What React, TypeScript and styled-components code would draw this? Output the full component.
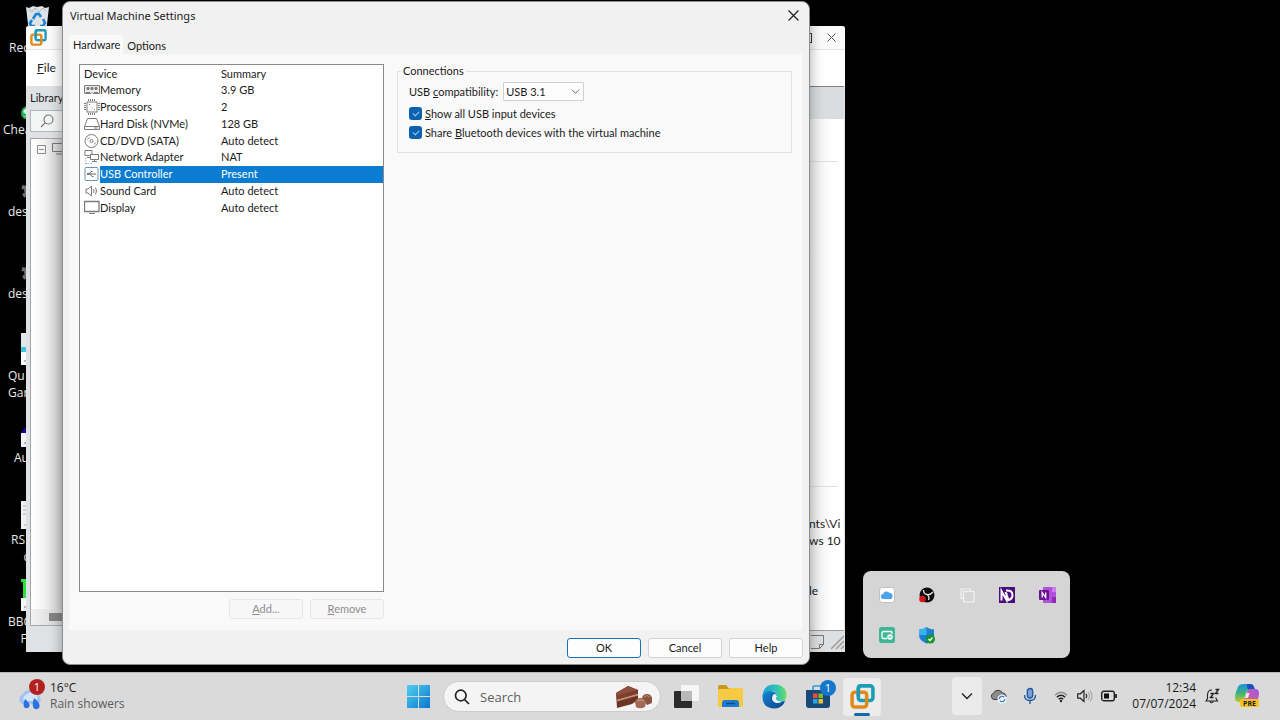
import React from 'react';
import styled, { createGlobalStyle, css } from 'styled-components';

const uiFont = `Lato, "Noto Sans", sans-serif`;
const shellFont = `"Open Sans", "Noto Sans", sans-serif`;

const GlobalStyle = createGlobalStyle`
  * { box-sizing: border-box; }
  body { margin: 0; background: #000; font-family: ${shellFont}; font-size: 12px; color: #1b1b1b; }
  button, select, input { font: inherit; color: inherit; }
  svg { display: block; flex: none; }
`;

const Screen = styled.div`
  display: grid;
  grid-template-rows: 1fr auto;
  min-height: 100vh;
  background: #000;
`;

const Desktop = styled.main`
  position: relative;
  overflow: hidden;
  min-height: 668px;
`;

/* ---------- desktop shortcuts ---------- */

const Shortcuts = styled.ul`
  list-style: none;
  margin: 0;
  padding: 0;
  width: 74px;
`;

const Shortcut = styled.li`
  display: flex;
  flex-direction: column;
  align-items: center;
  height: 82px;
  padding-top: 5px;
`;

const ShortcutLabel = styled.span<{ $indent: number }>`
  align-self: stretch;
  margin-top: 2px;
  padding-left: ${(p) => p.$indent}px;
  font-size: 12px;
  line-height: 17px;
  white-space: pre;
  color: #e8e8e8;
`;

/* ---------- windows ---------- */

const LibraryWindow = styled.section`
  position: absolute;
  left: 26px;
  top: 26px;
  width: 819px;
  height: 626px;
  display: flex;
  flex-direction: column;
  background: #dfe2e4;
  border-radius: 3px 3px 0 0;
  font-family: ${uiFont};
  overflow: hidden;
`;

const LibraryTitle = styled.header`
  display: flex;
  align-items: center;
  justify-content: space-between;
  height: 24px;
  padding: 0 9px 0 4px;
  background: #fbfbfb;
  border-bottom: 1px solid #e4e4e4;
`;

const WindowButtons = styled.div`
  display: flex;
  gap: 14px;
`;

const PlainButton = styled.button`
  display: grid;
  place-items: center;
  padding: 0;
  border: 0;
  background: none;
`;

const MenuBar = styled.nav`
  height: 36px;
  padding-left: 11px;
  background: #fff;
  line-height: 35px;
`;

const LibraryBody = styled.div`
  flex: 1;
  display: flex;
  min-height: 0;
`;

const Sidebar = styled.aside`
  width: 220px;
  display: flex;
  flex-direction: column;
  padding: 0 4px 26px;
`;

const SidebarTitle = styled.h2`
  margin: 0;
  font-size: 11px;
  font-weight: 400;
  line-height: 24px;
`;

const SidebarSearch = styled.div`
  display: flex;
  align-items: center;
  height: 22px;
  margin-bottom: 6px;
  padding-left: 9px;
  border: 1px solid #b4b6b8;
  background: #f4f5f5;
`;

const Tree = styled.div`
  flex: 1;
  display: flex;
  flex-direction: column;
  justify-content: space-between;
  border: 1px solid #a3a5a8;
  background: linear-gradient(90deg, #fff, #f4f4f4 12px, #c8c8c8 34px);
`;

const TreeRoot = styled.div`
  display: flex;
  align-items: center;
  gap: 6px;
  padding: 4px 6px;
`;

const ScrollTrack = styled.div`
  height: 16px;
  padding: 4px 0 4px 18px;
  background: linear-gradient(90deg, #f2f2f2, #d2d2d2 34px);
`;

const ScrollThumb = styled.div`
  height: 8px;
  background: #858585;
`;

const Details = styled.div`
  flex: 1;
  display: flex;
  flex-direction: column;
  margin-right: 1px;
  border-top: 1px solid #7f8183;
`;

const DetailsTabs = styled.div`
  height: 32px;
  background: #dadddf;
`;

const DetailsPage = styled.div`
  flex: 1;
  display: flex;
  flex-direction: column;
  padding: 0 6px;
  background: linear-gradient(270deg, #fff, #fff 12px, #ececec 34px);
`;

const DetailsBand = styled.div<{ $height: number }>`
  height: ${(p) => p.$height}px;
  border-bottom: 1px solid #dcdcdc;
`;

const DetailsText = styled.div`
  align-self: flex-end;
  width: 29px;
  margin-top: 28px;
`;

const DetailsLine = styled.p<{ $gap?: number }>`
  margin: ${(p) => p.$gap ?? 0}px 0 0;
  line-height: 17px;
  white-space: pre;
`;

const StatusBar = styled.footer`
  display: flex;
  align-items: center;
  justify-content: flex-end;
  gap: 6px;
  height: 22px;
  border-top: 1px solid #98999b;
  background: #dddfe1;
`;

const Dialog = styled.section`
  position: absolute;
  left: 62px;
  top: 1px;
  width: 748px;
  height: 664px;
  display: flex;
  flex-direction: column;
  border: 1px solid #8d8d8d;
  border-radius: 8px;
  background: #f1f1f1;
  box-shadow: 0 0 14px rgba(0, 0, 0, 0.35);
  font-family: ${uiFont};
  font-size: 11px;
  overflow: hidden;
`;

const DialogTitle = styled.header`
  display: flex;
  align-items: center;
  justify-content: space-between;
  height: 28px;
  padding: 0 10px 2px 7px;
  font-family: "Noto Sans", sans-serif;
`;

const DialogHeading = styled.h1`
  margin: 0;
  font-size: 11px;
  font-weight: 400;
`;

const TabStrip = styled.div`
  display: flex;
  align-items: flex-end;
  height: 24px;
  padding: 0 6px;
`;

const Tab = styled.button<{ $active?: boolean }>`
  height: 17px;
  padding: 0 4px;
  border: 0;
  background: none;
  line-height: 17px;
  ${(p) =>
    p.$active &&
    css`
      height: 19px;
      padding-right: 3px;
      background: #f9f9f9;
    `}
`;

const TabPage = styled.div`
  flex: 1;
  display: flex;
  gap: 13px;
  margin: 0 7px 0 6px;
  padding: 10px 10px 11px;
  background: #f9f9f9;
`;

const DeviceColumn = styled.div`
  flex: 0 0 305px;
  display: flex;
  flex-direction: column;
  gap: 7px;
`;

const DeviceList = styled.div`
  flex: 1;
  padding-top: 1px;
  border: 1px solid #8a8a8a;
  background: #fff;
`;

const DeviceTable = styled.table`
  width: 100%;
  height: 150px;
  border-collapse: collapse;
  table-layout: fixed;
  text-align: left;

  th, td { padding: 0; font-weight: 400; line-height: 16px; white-space: nowrap; }
`;

const IconCol = styled.col`
  width: 20px;
`;

const NameCol = styled.col`
  width: 121px;
`;

const DeviceHead = styled.th`
  &:first-child { text-indent: 4px; }
`;

const IconCell = styled.td`
  svg { margin: 0 0 0 4px; }
`;

const DeviceRow = styled.tr<{ $selected: boolean }>`
  ${(p) =>
    p.$selected &&
    css`
      color: #fff;
      td + td { background: #0b7cd0; }
    `}
`;

const ButtonRow = styled.div`
  display: flex;
  justify-content: flex-end;
  gap: 7px;
`;

const PushButton = styled.button<{ $primary?: boolean }>`
  width: 74px;
  height: 20px;
  padding: 0;
  border: 1px solid ${(p) => (p.$primary ? '#1a72b8' : '#d2d2d2')};
  border-radius: 3px;
  background: #fdfdfd;
  line-height: 18px;

  &:disabled {
    border-color: #e6e6e6;
    background: #f7f7f7;
    color: #8e8e8e;
  }
`;

const DialogFooter = styled.footer`
  padding: 8px 6px 6px;
`;

const Connections = styled.fieldset`
  flex: 1;
  align-self: flex-start;
  height: 89px;
  margin: 0;
  padding: 4px 11px;
  border: 1px solid #e0e0e0;
`;

const Legend = styled.legend`
  margin-left: -8px;
  padding: 0 2px;
  line-height: 14px;
`;

const Field = styled.div`
  display: flex;
  align-items: center;
  justify-content: flex-start;
  gap: 5px;
  height: 19px;
  margin-bottom: 3px;
`;

const SelectBox = styled.div`
  position: relative;
  width: 81px;

  svg { position: absolute; right: 4px; top: 5px; pointer-events: none; }
`;

const Select = styled.select`
  appearance: none;
  width: 100%;
  height: 19px;
  padding: 0 2px;
  border: 1px solid #cfcfcf;
  border-radius: 1px;
  background: #fdfdfd;
`;

const CheckLine = styled.label`
  display: flex;
  align-items: center;
  gap: 3px;
  height: 19px;
`;

const CheckBox = styled.input`
  appearance: none;
  width: 13px;
  height: 13px;
  margin: 0;
  border-radius: 3px;
  background: #0a62b0;
  display: grid;
  place-items: center;

  &:checked::after {
    content: '';
    width: 5px;
    height: 3px;
    border: solid #a9cbe8;
    border-width: 0 0 1px 1px;
    transform: translateY(-1px) rotate(-45deg);
  }
`;

/* ---------- tray flyout ---------- */

const TrayFlyout = styled.section`
  position: absolute;
  right: 210px;
  bottom: 14px;
  display: grid;
  grid-template-columns: repeat(5, 40px);
  grid-auto-rows: 40px;
  padding: 4px 3px 3px 4px;
  border-radius: 8px;
  background: #d5d5d5;
`;

/* ---------- taskbar ---------- */

const Taskbar = styled.footer`
  display: grid;
  grid-template-columns: 1fr auto 1fr;
  align-items: center;
  height: 48px;
  border-top: 1px solid #b9b9b9;
  background: #dadada;
`;

const Weather = styled.button`
  display: flex;
  align-items: center;
  gap: 5px;
  padding: 0 0 2px 18px;
  border: 0;
  background: none;
  text-align: left;
  line-height: 16px;
`;

const WeatherText = styled.span`
  display: flex;
  flex-direction: column;
`;

const Muted = styled.span`
  color: #5c5c5c;
`;

const Apps = styled.nav`
  display: flex;
  align-items: center;
  gap: 6px;
`;

const AppButton = styled(PlainButton)<{ $active?: boolean }>`
  position: relative;
  width: 38px;
  height: 38px;
  border-radius: 4px;
  ${(p) =>
    p.$active &&
    css`
      background: #ececec;
      &::after {
        content: '';
        position: absolute;
        bottom: 0;
        left: 11px;
        width: 16px;
        height: 3px;
        border-radius: 2px;
        background: #1769ae;
      }
    `}
`;

const SearchBox = styled.label`
  display: flex;
  align-items: center;
  width: 218px;
  height: 31px;
  padding: 0 8px 0 10px;
  border: 1px solid #cbcbcb;
  border-radius: 16px;
  background: #f4f4f4;
`;

const SearchInput = styled.input`
  flex: 1;
  min-width: 0;
  padding: 0 0 0 10px;
  border: 0;
  outline: 0;
  background: none;
  font-size: 13px;
  &::placeholder { color: #5f5f5f; opacity: 1; }
`;

const Tray = styled.div`
  display: flex;
  align-items: center;
  justify-content: flex-end;
  gap: 15px;
  padding: 0 21px 2px 0;
`;

const TrayGroup = styled.div`
  display: flex;
  align-items: center;
  gap: 8px;
`;

const TrayToggle = styled(PlainButton)`
  width: 30px;
  height: 38px;
  border-radius: 4px;
  background: #ebebeb;
`;

const Clock = styled.time`
  text-align: right;
  line-height: 16px;
  white-space: pre-line;
`;

/* ---------- drawings ---------- */

const VmLogo = ({ size }: { size: number }) => (
  <svg width={size} height={size} viewBox="0 0 24 24" fill="none" strokeWidth="3.4">
    <rect x="8" y="1.8" width="14" height="14" rx="2.5" stroke="#1d9cb8" />
    <rect x="2" y="8" width="14" height="14" rx="2.5" stroke="#dd8b1c" />
    <path d="M8 12V4.3Q8 1.8 10.500 1.800" stroke="#1d9cb8" />
  </svg>
);

const CloseIcon = ({ size, color }: { size: number; color: string }) => (
  <svg width={size} height={size} viewBox="0 0 10 10" stroke={color} strokeWidth="1.1">
    <path d="M.5.5l9 9M9.500.5l-9 9" />
  </svg>
);

const ShortcutArt = ({ kind }: { kind: string }) => (
  <svg width="32" height="32" viewBox="0 0 32 32">
    {kind === 'bin' && (
      <>
        <path d="M5 2l3 1 4-2 4 1 5-1 3 2 4-1-3 26H8z" fill="#dfe3e6" />
        <path d="M8 4l3 3 3-4 4 4 4-4 3 3" stroke="#aeb5ba" fill="none" />
        <path d="M12 14l3-5h3l2 3M22 14l2 4-2 3h-3M14 21h-4l-1-3 2-3" stroke="#1a83d2" strokeWidth="2.600" fill="none" />
      </>
    )}
    {kind === 'check' && (
      <>
        <circle cx="7" cy="26" r="7" fill="#1faa55" />
        <circle cx="7" cy="26" r="5" fill="#e6f5ea" />
        <path d="M2 26l3 3" stroke="#1faa55" strokeWidth="2" />
      </>
    )}
    {kind === 'gear' && (
      <g stroke="#6f6f6f" fill="none">
        <circle cx="12" cy="21" r="7" strokeWidth="4" />
        <circle cx="12" cy="21" r="10" strokeWidth="3" strokeDasharray="4 4" />
      </g>
    )}
    {kind === 'cyan' && (
      <>
        <path d="M0 0h32v32H0z" fill="#fbfbfb" />
        <path d="M0 0h32v14H0z" fill="#dfe7ea" />
        <path d="M0 14h32v5H0z" fill="#3fc3dd" />
        <path d="M3 28h2" stroke="#777" />
      </>
    )}
    {kind === 'blue' && (
      <>
        <path d="M0 18L5 12h27v20H0z" fill="#1408a8" />
        <path d="M0 18h32v14H0z" fill="#f4f4fb" />
        <path d="M3 28h2" stroke="#777" />
      </>
    )}
    {kind === 'page' && (
      <>
        <path d="M0 4h32v28H0z" fill="#f1f1f1" />
        <path d="M2 9h3M2 13h3M2 17h3M3 28h2" stroke="#aaa" />
      </>
    )}
    {kind === 'green' && (
      <>
        <path d="M0 0h32v19H2V3H0z" fill="#2fe03a" />
        <path d="M0 19h32v13H0z" fill="#f4f4f4" />
        <path d="M3 28h2" stroke="#777" />
      </>
    )}
  </svg>
);

const deviceArt: Record<string, React.ReactNode> = {
  memory: (
    <>
      <path d="M.5 3.500h15v8H9l-1-1-1 1H.5z" fill="#ececec" />
      <path d="M3 5.500h2v2H3zM7 5.500h2v2H7zM11 5.500h2v2h-2z" fill="#777" />
      <path d="M2 10.500h4M10 10.500h4" />
    </>
  ),
  cpu: (
    <>
      <rect x="3" y="3" width="10" height="10" />
      <path d="M4.500 0v2M6.500 0v2M8.500 0v2M10.500 0v2M4.500 14v2M6.500 14v2M8.500 14v2M10.500 14v2M0 4.500h2M0 6.500h2M0 8.500h2M0 10.500h2M14 4.500h2M14 6.500h2M14 8.500h2M14 10.500h2" />
      <path d="M5 5.500h1M10 10.500h1M7.500 9h1" />
    </>
  ),
  disk: (
    <>
      <path d="M3.500 2.500h9l3 8v3H.5v-3zM.5 10.500h15" />
      <path d="M10 12h3.500" />
    </>
  ),
  disc: (
    <>
      <circle cx="7.500" cy="8" r="6.500" />
      <circle cx="7.500" cy="8" r="1.500" />
      <path d="M3.500 6.500L5 4.500M11.500 9.500L10 11.500" />
    </>
  ),
  net: (
    <>
      <path d="M1 1.500h7v5H1zM3 8.500h3" />
      <path d="M6.500 5.500h8v5h-8zM10.500 10.500v2M8 12.500h5" fill="#fff" />
      <path d="M1.500 9v6M2 14.500h6" strokeDasharray="1 1.500" stroke="#8aa" />
    </>
  ),
  usb: (
    <>
      <rect x="1" y="1.500" width="13" height="13" rx="1" fill="#fff" stroke="#6d94b3" />
      <path d="M3 8h9M5 8l2-2.500h1.500M6 8l2 2.500h1.500" stroke="#666" />
      <circle cx="4" cy="8" r="1" fill="#666" stroke="none" />
    </>
  ),
  sound: (
    <path d="M2 6h2l3.500-3v10L4 10H2zM9.500 6q1 2 0 4M11.500 4.500q2 3.500 0 7" />
  ),
  display: (
    <>
      <path d="M.5 1.500h14.500v10H.5z" strokeWidth="1.300" />
      <path d="M5 13.500h6" />
    </>
  ),
};

const DeviceIcon = ({ kind }: { kind: string }) => (
  <svg width="16" height="16" viewBox="0 0 16 16" fill="none" stroke="#7c7c7c">
    {deviceArt[kind]}
  </svg>
);

const Chevron = ({ size, color }: { size: number; color: string }) => (
  <svg width={size} height={size} viewBox="0 0 10 10" fill="none" stroke={color} strokeWidth="1.100">
    <path d="M1 3l4 4 4-4" />
  </svg>
);

/* ---------- data ---------- */

const shortcuts = [
  { art: 'bin', label: 'Rec', indent: 9 },
  { art: 'check', label: 'Chea', indent: 3 },
  { art: 'gear', label: 'des', indent: 8 },
  { art: 'gear', label: 'des', indent: 8 },
  { art: 'cyan', label: 'Qu\nGar', indent: 8 },
  { art: 'blue', label: 'Au', indent: 14 },
  { art: 'page', label: 'RS\n    c', indent: 11 },
  { art: 'green', label: 'BBC\n    F', indent: 8 },
];

const devices = [
  { icon: 'memory', name: 'Memory', summary: '3.9 GB' },
  { icon: 'cpu', name: 'Processors', summary: '2' },
  { icon: 'disk', name: 'Hard Disk (NVMe)', summary: '128 GB' },
  { icon: 'disc', name: 'CD/DVD (SATA)', summary: 'Auto detect' },
  { icon: 'net', name: 'Network Adapter', summary: 'NAT' },
  { icon: 'usb', name: 'USB Controller', summary: 'Present' },
  { icon: 'sound', name: 'Sound Card', summary: 'Auto detect' },
  { icon: 'display', name: 'Display', summary: 'Auto detect' },
];

/* ---------- parts ---------- */

const Library = () => (
  <LibraryWindow aria-label="Library">
    <LibraryTitle>
      <VmLogo size={17} />
      <WindowButtons>
        <PlainButton aria-label="Maximize">
          <svg width="10" height="10" viewBox="0 0 10 10" fill="none" stroke="#333">
            <rect x=".5" y=".5" width="8" height="9" />
          </svg>
        </PlainButton>
        <PlainButton aria-label="Close">
          <CloseIcon size={9} color="#555" />
        </PlainButton>
      </WindowButtons>
    </LibraryTitle>
    <MenuBar><u>F</u>ile</MenuBar>
    <LibraryBody>
      <Sidebar>
        <SidebarTitle>Library</SidebarTitle>
        <SidebarSearch>
          <svg width="14" height="14" viewBox="0 0 14 14" fill="none" stroke="#777" strokeWidth="1.200">
            <circle cx="8.500" cy="5.500" r="4.500" />
            <path d="M5.300 8.700L1 13" />
          </svg>
        </SidebarSearch>
        <Tree>
          <TreeRoot>
            <svg width="9" height="9" viewBox="0 0 9 9" fill="none" stroke="#8c8c8c">
              <path d="M.5.5h8v8h-8zM2 4.500h5" />
            </svg>
            <svg width="14" height="12" viewBox="0 0 14 12" fill="none" stroke="#777">
              <path d="M.5.5h13v8H.5zM4 11h6" />
            </svg>
          </TreeRoot>
          <ScrollTrack><ScrollThumb /></ScrollTrack>
        </Tree>
      </Sidebar>
      <Details>
        <DetailsTabs />
        <DetailsPage>
          <DetailsBand $height={43} />
          <DetailsBand $height={325} />
          <DetailsText>
            <DetailsLine>nts\Vi</DetailsLine>
            <DetailsLine>ws 10</DetailsLine>
            <DetailsLine $gap={33}>le</DetailsLine>
          </DetailsText>
        </DetailsPage>
        <StatusBar>
          <svg width="14" height="14" viewBox="0 0 14 14" fill="none" stroke="#777">
            <path d="M0 .5h12.500v9l-4 4H0M12.500 9.500h-4v4" />
          </svg>
          <svg width="13" height="14" viewBox="0 0 13 14" stroke="#999" strokeWidth="1.400">
            <path d="M0 14L13 1M5 14l8-8M10 14l3-3" />
          </svg>
        </StatusBar>
      </Details>
    </LibraryBody>
  </LibraryWindow>
);

const Settings = () => (
  <Dialog role="dialog" aria-labelledby="settings-title">
    <DialogTitle>
      <DialogHeading id="settings-title">Virtual Machine Settings</DialogHeading>
      <PlainButton aria-label="Close">
        <CloseIcon size={11} color="#222" />
      </PlainButton>
    </DialogTitle>
    <TabStrip role="tablist">
      <Tab role="tab" aria-selected $active>Hardware</Tab>
      <Tab role="tab" aria-selected={false}>Options</Tab>
    </TabStrip>
    <TabPage role="tabpanel">
      <DeviceColumn>
        <DeviceList>
          <DeviceTable>
            <colgroup>
              <IconCol />
              <NameCol />
              <col />
            </colgroup>
            <thead>
              <tr>
                <DeviceHead colSpan={2}>Device</DeviceHead>
                <DeviceHead>Summary</DeviceHead>
              </tr>
            </thead>
            <tbody>
              {devices.map((d) => (
                <DeviceRow key={d.name} $selected={d.icon === 'usb'}>
                  <IconCell><DeviceIcon kind={d.icon} /></IconCell>
                  <td>{d.name}</td>
                  <td>{d.summary}</td>
                </DeviceRow>
              ))}
            </tbody>
          </DeviceTable>
        </DeviceList>
        <ButtonRow>
          <PushButton disabled><u>A</u>dd...</PushButton>
          <PushButton disabled><u>R</u>emove</PushButton>
        </ButtonRow>
      </DeviceColumn>
      <Connections>
        <Legend>Connections</Legend>
        <Field>
          <label htmlFor="usb-compat">USB <u>c</u>ompatibility:</label>
          <SelectBox>
            <Select id="usb-compat" defaultValue="USB 3.1">
              <option>USB 3.1</option>
            </Select>
            <Chevron size={9} color="#666" />
          </SelectBox>
        </Field>
        <CheckLine>
          <CheckBox type="checkbox" defaultChecked />
          <span><u>S</u>how all USB input devices</span>
        </CheckLine>
        <CheckLine>
          <CheckBox type="checkbox" defaultChecked />
          <span>Share <u>B</u>luetooth devices with the virtual machine</span>
        </CheckLine>
      </Connections>
    </TabPage>
    <DialogFooter>
      <ButtonRow>
        <PushButton $primary>OK</PushButton>
        <PushButton>Cancel</PushButton>
        <PushButton>Help</PushButton>
      </ButtonRow>
    </DialogFooter>
  </Dialog>
);

const HiddenIcons = () => (
  <TrayFlyout aria-label="Hidden icons">
    <PlainButton aria-label="iCloud">
      <svg width="16" height="16" viewBox="0 0 16 16">
        <rect x=".5" y=".5" width="15" height="15" rx="3" fill="#fff" stroke="#c4bfb8" />
        <path d="M4.500 12a2.500 2.500 0 01-.3-5A3.500 3.500 0 0110.500 6a3 3 0 013 3 2.500 2.500 0 01-1.500 3z" fill="#4aa3ec" />
      </svg>
    </PlainButton>
    <PlainButton aria-label="OBS Studio">
      <svg width="16" height="16" viewBox="0 0 16 16">
        <circle cx="8" cy="8" r="7.500" fill="#0c0c0c" />
        <path d="M4.500 3q0 4 3.500 4.500T14 5M8 7.500q3 2 1.500 5.500" stroke="#e4e4e4" strokeWidth="1.300" fill="none" />
        <circle cx="3.500" cy="12" r="3.300" fill="#d3141c" />
      </svg>
    </PlainButton>
    <PlainButton aria-label="Windows">
      <svg width="15" height="15" viewBox="0 0 15 15" fill="none" stroke="#f2f2f2" strokeWidth="1.200">
        <path d="M3 10.500H1V1h9.500v2" />
        <rect x="3.500" y="3.500" width="10.500" height="10.500" />
      </svg>
    </PlainButton>
    <PlainButton aria-label="NVDA">
      <svg width="16" height="16" viewBox="0 0 16 16" fill="none">
        <path d="M0 0h16v16H0z" fill="#4b0d7d" />
        <path d="M2.500 13.500V4l5 9V6M7 3.500q6.500-.5 6.500 4.500 0 4-4 5L6.500 5" stroke="#fff" strokeWidth="2" />
      </svg>
    </PlainButton>
    <PlainButton aria-label="OneNote">
      <svg width="17" height="16" viewBox="0 0 17 16">
        <rect x="4" y="0" width="13" height="16" rx="1" fill="#b14fd6" />
        <path d="M13 0h4v5h-4z" fill="#d07be8" />
        <path d="M13 10h4v6h-4z" fill="#8a2cb8" />
        <rect x="0" y="3" width="10" height="10" rx="1" fill="#6a1295" />
        <path d="M3.200 10.500v-5l3.500 5v-5" stroke="#fff" strokeWidth="1.300" fill="none" />
      </svg>
    </PlainButton>
    <PlainButton aria-label="Screen capture">
      <svg width="16" height="16" viewBox="0 0 16 16" fill="none">
        <rect width="16" height="16" rx="2.500" fill="#3fb795" />
        <path d="M8 11.500H4.500a1.500 1.500 0 01-1.500-1.500V6a1.500 1.500 0 011.500-1.500h7A1.500 1.500 0 0113 6v1" stroke="#fff" strokeWidth="1.300" />
        <circle cx="11" cy="10" r="2.800" fill="#fff" />
        <path d="M9.500 10h3" stroke="#3fb795" />
      </svg>
    </PlainButton>
    <PlainButton aria-label="Windows Security">
      <svg width="16" height="17" viewBox="0 0 16 17">
        <path d="M7.500 0Q10 2 15 2.500V8q0 5.500-7.500 8.500Q0 13.500 0 8V2.500Q5 2 7.500 0z" fill="#1d7fd0" />
        <path d="M7.500 0v8H0V2.500Q5 2 7.500 0z" fill="#39b3ea" />
        <path d="M7.500 8H15q0 5.500-7.500 8.500z" fill="#1665b3" />
        <circle cx="11.500" cy="12" r="4.500" fill="#16962b" />
        <path d="M9.500 12l1.500 1.500 2.500-3" stroke="#fff" fill="none" strokeWidth="1.200" />
      </svg>
    </PlainButton>
  </TrayFlyout>
);

const Badge = styled.span<{ $color: string; $top: number; $right: number }>`
  position: absolute;
  top: ${(p) => p.$top}px;
  right: ${(p) => p.$right}px;
  width: 16px;
  height: 16px;
  border-radius: 8px;
  background: ${(p) => p.$color};
  color: #fff;
  font-size: 11px;
  line-height: 16px;
  text-align: center;
`;

const WeatherArt = styled.span`
  position: relative;
  width: 27px;
  height: 34px;
  display: grid;
  align-items: end;
  padding-bottom: 3px;
`;

const TaskbarView = () => (
  <Taskbar>
    <Weather>
      <WeatherArt>
        <svg width="25" height="21" viewBox="0 0 25 21">
          <path d="M5 15a5 5 0 01-.5-9.500A8 8 0 0119 5.500a5 5 0 01.5 9.500z" fill="#a3c2ef" />
          <path d="M6 12a4 4 0 012-6 7 7 0 0111 0q2 4-2 6z" fill="#d5e3f7" />
          <path d="M7 10q5 4 4.500 7a3 3 0 01-5.800 0Q5 14 7 10zM16 9q6.500 5 5.500 9a3.500 3.500 0 01-6.500 0Q14 14 16 9z" fill="#2a72e0" />
        </svg>
        <Badge $color="#b3201f" $top={0} $right={0}>1</Badge>
      </WeatherArt>
      <WeatherText>
        <span>16°C</span>
        <Muted>Rain showers</Muted>
      </WeatherText>
    </Weather>

    <Apps aria-label="Apps">
      <AppButton aria-label="Start">
        <svg width="23" height="23" viewBox="0 0 23 23">
          <defs>
            <linearGradient id="start" x1="0" y1="0" x2="1" y2="1">
              <stop offset="0" stopColor="#4fd0f2" />
              <stop offset="1" stopColor="#0a76cc" />
            </linearGradient>
          </defs>
          <path d="M0 0h11v11H0zM12 0h11v11H12zM0 12h11v11H0zM12 12h11v11H12z" fill="url(#start)" />
        </svg>
      </AppButton>
      <SearchBox>
        <svg width="16" height="16" viewBox="0 0 16 16" fill="none" stroke="#222" strokeWidth="1.700">
          <circle cx="6.800" cy="6.500" r="5.300" />
          <path d="M10.500 10.500L15 15" />
        </svg>
        <SearchInput type="search" placeholder="Search" aria-label="Search" />
        <svg width="36" height="24" viewBox="0 0 36 24">
          <path d="M0 8L12 1l10 4v10l-6 4-15 4z" fill="#6b3526" />
          <path d="M0 8L12 1l10 4L1 11z" fill="#8f4f3d" />
          <path d="M1 14.500l21-6v2l-21 6z" fill="#c98f74" />
          <path d="M1 11l21-5v2.500l-21 6z" fill="#7b4030" />
          <path d="M26 13q1-4 5-4t5 4v5l-5 2z" fill="#8a5441" />
          <path d="M28 12q3-3 6 0" stroke="#bd8a72" fill="none" />
          <path d="M19 17q1-4 5.500-4t5.500 4l-1 5q-5 2.500-9 0z" fill="#a36a53" />
          <path d="M21 16q3-2.500 7 0" stroke="#cf9f89" fill="none" />
        </svg>
      </SearchBox>
      <AppButton aria-label="Task view">
        <svg width="25" height="23" viewBox="0 0 25 23">
          <rect x="0" y="6" width="18" height="17" rx="1" fill="#2b2b2b" />
          <rect x="7" y="0" width="18" height="16" rx="1" fill="#f6f6f6" />
          <path d="M7 6h11v10H7z" fill="#b9b9b9" />
        </svg>
      </AppButton>
      <AppButton aria-label="File Explorer">
        <svg width="25" height="23" viewBox="0 0 25 23">
          <path d="M0 2q0-2 2-2h6l2.500 3H24v6H0z" fill="#c9971a" />
          <path d="M0 5q0-1 1-1h9l2-1h12q1 0 1 1v17q0 1-1 1H1q-1 0-1-1z" fill="#f6ca45" />
          <path d="M4 22v-4q0-3 3-3h11q3 0 3 3v4z" fill="#1c7bd0" />
          <path d="M8 18.500h9" stroke="#0b4a8a" strokeWidth="1.400" />
        </svg>
      </AppButton>
      <AppButton aria-label="Edge">
        <svg width="25" height="25" viewBox="0 0 25 25">
          <defs>
            <linearGradient id="edgeTop" x1="0" y1="0" x2="1" y2="0">
              <stop offset="0" stopColor="#1a9fd8" />
              <stop offset=".6" stopColor="#2fc5b4" />
              <stop offset="1" stopColor="#6be05a" />
            </linearGradient>
            <linearGradient id="edgeBase" x1="0" y1="0" x2="1" y2="1">
              <stop offset="0" stopColor="#1489d8" />
              <stop offset="1" stopColor="#0c3f85" />
            </linearGradient>
          </defs>
          <path d="M.5 12Q1.500 6 9 7q6 1 6 5.500c0 1-1 1.500-1 2.500q1 3 6 2.500 2 0 3.500-1.500-3 8.500-11 8.500Q0 24 .5 12z" fill="url(#edgeBase)" />
          <path d="M.5 12Q1.500.5 12.500.5 24 1 24.500 11q0 6-6.500 6.500-4 0-4-2.500 0-.6.600-1.300Q16 8 9.500 7 3 6.500.5 12z" fill="url(#edgeTop)" />
          <path d="M8.500 15q0-4 4-5.500 3 1 2.500 3-1 1.500-1 2.500 1 3.500 8 2.500-3 4-7.500 3.500-6-.5-6-6z" fill="#0f5ba8" />
          <path d="M10 14q0-3 2.500-4.300 2.500.800 2.500 2.800-.800 1.300-1 2.300.5 2.700 6 2.700-4 2.500-7 1-3-1.500-3-4.500z" fill="#e7f1f6" />
        </svg>
      </AppButton>
      <AppButton aria-label="Microsoft Store">
        <svg width="24" height="24" viewBox="0 0 24 24">
          <path d="M7 5V2q0-1 1-1h8q1 0 1 1v3" stroke="#2e9bd8" strokeWidth="1.600" fill="none" />
          <path d="M0 5h24v15q0 3-3 3H3q-3 0-3-3z" fill="#174a78" />
          <path d="M7 8.500h4.500V13H7z" fill="#e8502a" />
          <path d="M12.500 8.500H17V13h-4.500z" fill="#7fba2c" />
          <path d="M7 14h4.500v4.500H7z" fill="#2aa3e8" />
          <path d="M12.500 14H17v4.500h-4.500z" fill="#f7be2b" />
        </svg>
        <Badge $color="#1477cc" $top={2} $right={1}>1</Badge>
      </AppButton>
      <AppButton aria-label="VMware Workstation" $active>
        <VmLogo size={25} />
      </AppButton>
    </Apps>

    <Tray>
      <TrayGroup>
        <TrayToggle aria-label="Hide icons">
          <svg width="12" height="8" viewBox="0 0 12 8" fill="none" stroke="#222" strokeWidth="1.400">
            <path d="M1 1.500l5 5 5-5" />
          </svg>
        </TrayToggle>
        <svg width="17" height="16" viewBox="0 0 17 16">
          <path d="M3.800 11.500a3.300 3.300 0 01-.3-6.300A5 5 0 0112.500 5a3.500 3.500 0 013.500 4l-3 2.500z" fill="#8b8b8b" stroke="#3b3b3b" />
          <circle cx="12" cy="11" r="4.500" fill="#f2f6fa" />
          <path d="M9.200 11a2.800 2.800 0 015-1.700M14.800 11a2.800 2.800 0 01-5 1.700" stroke="#2577c6" fill="none" strokeWidth="1.100" />
        </svg>
      </TrayGroup>
      <svg width="16" height="18" viewBox="0 0 16 18" fill="none" stroke="#1d56a5" strokeWidth="1.300">
        <rect x="5.300" y="1.500" width="5.400" height="9.500" rx="2.700" fill="#7d9fce" />
        <path d="M2.500 8q0 5.500 5.500 5.500T13.500 8M8 13.500V17" />
      </svg>
      <TrayGroup>
        <svg width="16" height="16" viewBox="0 0 16 16" fill="none" strokeWidth="1.300">
          <path d="M2 7.200q6-6 12 0" stroke="#8d8d8d" />
          <path d="M3.800 9.300q4.200-4 8.400 0" stroke="#222" />
          <path d="M5.700 11.300q2.300-2 4.600 0" stroke="#222" />
          <circle cx="8" cy="13" r="1.200" fill="#222" />
        </svg>
        <svg width="16" height="16" viewBox="0 0 16 16" fill="none" stroke="#222" strokeWidth="1.200">
          <path d="M.7 5.800h2.600L7 2.500v11L3.300 10.200H.7z" />
          <path d="M9 5.800q1.500 2.200 0 4.400" />
          <path d="M11 4q3 4 0 8M13 2.500q4 5.500 0 11" stroke="#a6a6a6" />
        </svg>
        <svg width="16" height="12" viewBox="0 0 16 12">
          <rect x=".7" y="1.300" width="12.600" height="9.400" rx="2" fill="none" stroke="#222" strokeWidth="1.400" />
          <path d="M3 3.500h5v5H3z" fill="#111" />
          <path d="M15 4v4" stroke="#222" strokeWidth="1.800" />
        </svg>
      </TrayGroup>
      <TrayGroup>
        <Clock>{'12:34\n07/07/2024'}</Clock>
        <svg width="16" height="18" viewBox="0 0 16 18" fill="none" stroke="#222" strokeWidth="1.100">
          <path d="M8 3Q3.500 3 3.500 8v3.500L2 14h11.500l-1.500-2.500v-1M6 14.500q1.500 2.500 3.500 0" />
          <path d="M6.500 6.500h3l-3 4h3M11.500 2.500H14.500l-3 4h3" strokeWidth="1.300" />
        </svg>
      </TrayGroup>
      <PlainButton aria-label="Copilot preview">
        <svg width="24" height="24" viewBox="0 0 24 24">
          <defs>
            <linearGradient id="cpLeft" x1="0" y1="0" x2="0" y2="1">
              <stop offset="0" stopColor="#1f8fe0" />
              <stop offset=".5" stopColor="#37b67c" />
              <stop offset="1" stopColor="#c3c429" />
            </linearGradient>
            <linearGradient id="cpRight" x1="1" y1="0" x2="0" y2="1">
              <stop offset="0" stopColor="#a05ae0" />
              <stop offset="1" stopColor="#ee5a80" />
            </linearGradient>
          </defs>
          <path d="M9 0h6q3 0 4 3l1 3h-5q-3 0-4 3l-2 6q-1 3-3 3H4q-4 0-4-4 0-3 1-6l2-5q1-3 6-3z" fill="url(#cpLeft)" />
          <path d="M12 0h3q3 0 4 3l1 3h-5q-2 0-3-3z" fill="#1c4fc0" />
          <path d="M15 5h5q4 0 4 4 0 3-1 6l-2 4q-1 3-4 3H9q-3 0-4-3 3 0 4-3l3-8q1-3 3-3z" fill="url(#cpRight)" />
          <path d="M11.500 9h3l-1.500 5h-3z" fill="#f3e4ee" />
          <rect x="5" y="15" width="19" height="8" rx="2" fill="#f7c21c" />
          <text x="14.500" y="21.600" fontSize="7" fontWeight="700" textAnchor="middle" fill="#222">PRE</text>
        </svg>
      </PlainButton>
    </Tray>
  </Taskbar>
);

export default function App() {
  return (
    <>
      <GlobalStyle />
      <Screen>
        <Desktop>
          <Shortcuts>
            {shortcuts.map((s, i) => (
              <Shortcut key={i}>
                <ShortcutArt kind={s.art} />
                <ShortcutLabel $indent={s.indent}>{s.label}</ShortcutLabel>
              </Shortcut>
            ))}
          </Shortcuts>
          <Library />
          <Settings />
          <HiddenIcons />
        </Desktop>
        <TaskbarView />
      </Screen>
    </>
  );
}
